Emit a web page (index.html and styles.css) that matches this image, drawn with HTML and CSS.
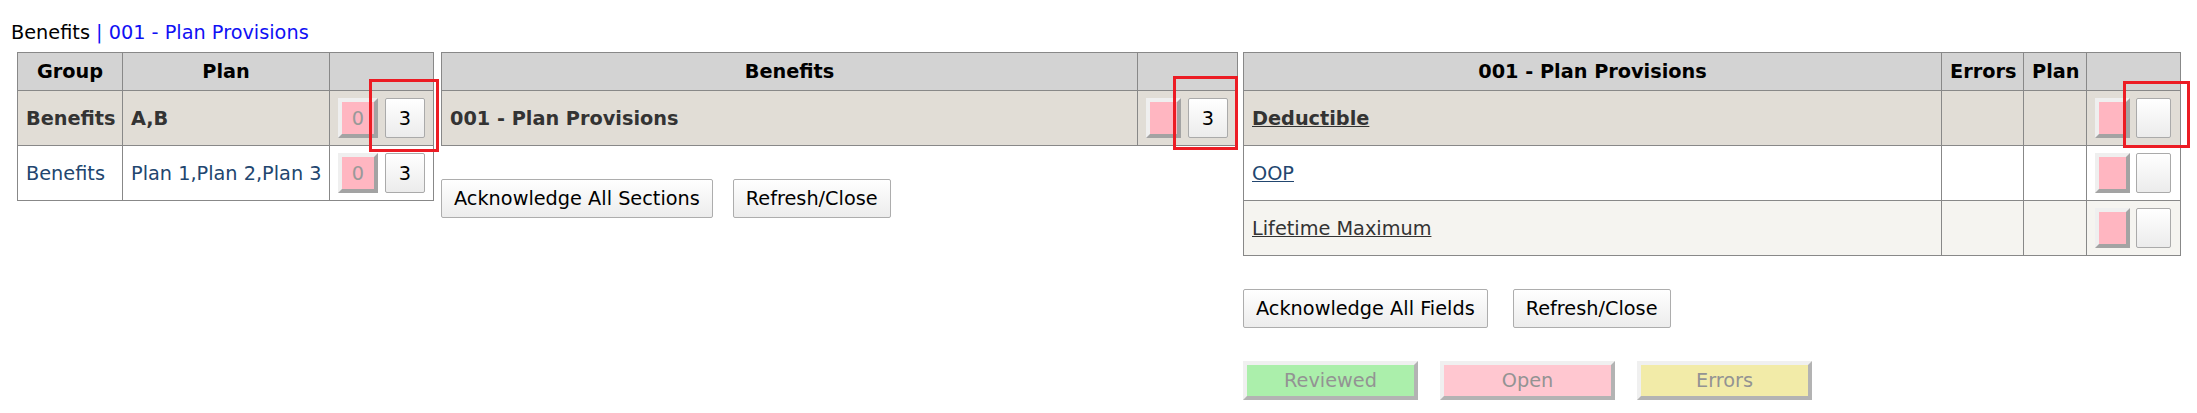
FILE: index.html
```html
<!DOCTYPE html>
<html>
<head>
  <title>Benefits Review</title>
  <link rel="stylesheet" href="styles.css">
</head>
<body>
  <div class="page">
    <div class="crumb">Benefits <a class="crumb-link" href="#">| 001 - Plan Provisions</a></div>

    <div class="panels">
      <div class="panel panel-groups">
        <table class="grid">
          <colgroup>
            <col style="width:105px">
            <col style="width:207px">
            <col style="width:104px">
          </colgroup>
          <thead>
            <tr>
              <th>Group</th>
              <th>Plan</th>
              <th></th>
            </tr>
          </thead>
          <tbody>
            <tr class="row-head">
              <td>Benefits</td>
              <td>A,B</td>
              <td>
                <div class="marks">
                  <button class="flag" disabled>0</button>
                  <span class="pick">
                    <button class="count">3</button>
                    <span class="ring ring-groups"></span>
                  </span>
                </div>
              </td>
            </tr>
            <tr class="row-item">
              <td class="blue">Benefits</td>
              <td class="blue">Plan 1,Plan 2,Plan 3</td>
              <td>
                <div class="marks">
                  <button class="flag" disabled>0</button>
                  <button class="count">3</button>
                </div>
              </td>
            </tr>
          </tbody>
        </table>
      </div>

      <div class="panel panel-sections">
        <table class="grid">
          <colgroup>
            <col style="width:696px">
            <col style="width:100px">
          </colgroup>
          <thead>
            <tr>
              <th>Benefits</th>
              <th></th>
            </tr>
          </thead>
          <tbody>
            <tr class="row-head">
              <td>001 - Plan Provisions</td>
              <td>
                <div class="marks">
                  <button class="flag flag-empty"></button>
                  <span class="pick">
                    <button class="count">3</button>
                    <span class="ring ring-sections"></span>
                  </span>
                </div>
              </td>
            </tr>
          </tbody>
        </table>
        <div class="actions actions-sections">
          <button class="btn">Acknowledge All Sections</button>
          <button class="btn">Refresh/Close</button>
        </div>
      </div>

      <div class="panel panel-fields">
        <table class="grid">
          <colgroup>
            <col style="width:698px">
            <col style="width:82px">
            <col style="width:63px">
            <col style="width:94px">
          </colgroup>
          <thead>
            <tr>
              <th>001 - Plan Provisions</th>
              <th>Errors</th>
              <th>Plan</th>
              <th></th>
            </tr>
          </thead>
          <tbody>
            <tr class="row-head">
              <td><a class="field field-dark" href="#">Deductible</a></td>
              <td></td>
              <td></td>
              <td>
                <div class="marks marks-tight">
                  <button class="flag flag-empty"></button>
                  <span class="pick">
                    <button class="count count-empty"></button>
                    <span class="ring ring-fields"></span>
                  </span>
                </div>
              </td>
            </tr>
            <tr class="row-item">
              <td><a class="field" href="#">OOP</a></td>
              <td></td>
              <td></td>
              <td>
                <div class="marks marks-tight">
                  <button class="flag flag-empty"></button>
                  <button class="count count-empty"></button>
                </div>
              </td>
            </tr>
            <tr class="row-alt">
              <td><a class="field field-dark" href="#">Lifetime Maximum</a></td>
              <td></td>
              <td></td>
              <td>
                <div class="marks marks-tight">
                  <button class="flag flag-empty"></button>
                  <button class="count count-empty"></button>
                </div>
              </td>
            </tr>
          </tbody>
        </table>
        <div class="actions actions-fields">
          <button class="btn">Acknowledge All Fields</button>
          <button class="btn">Refresh/Close</button>
        </div>
        <div class="legend">
          <button class="key key-reviewed" disabled>Reviewed</button>
          <button class="key key-open" disabled>Open</button>
          <button class="key key-errors" disabled>Errors</button>
        </div>
      </div>
    </div>
  </div>
</body>
</html>
```

FILE: styles.css
```css
body {
  margin: 0;
  font-family: "DejaVu Sans", Verdana, sans-serif;
  font-size: 19.3px;
  color: #000;
  background-color: #ffffff;
}
.page {
  padding: 21px 11px 0;
}
.crumb {
  height: 24px;
  line-height: 24px;
  margin-bottom: 7px;
}
.crumb-link {
  color: #1010f4;
  text-decoration: none;
}
.panels {
  display: flex;
  align-items: flex-start;
  margin-left: 6px;
}
.panel-groups {
  width: 416px;
  margin-right: 8px;
}
.panel-sections {
  width: 796px;
  margin-right: 6px;
}
.panel-fields {
  width: 937px;
}
.grid {
  width: 100%;
  table-layout: fixed;
  border-collapse: collapse;
}
.grid th, .grid td {
  border: 1px solid #888;
  padding: 0 8px;
  white-space: nowrap;
}
.grid th {
  height: 37px;
  background-color: #d3d3d3;
  font-weight: bold;
  text-align: center;
}
.grid td {
  height: 54px;
  text-align: left;
  color: #333;
}
.row-head td {
  background-color: #e1ddd6;
  font-weight: bold;
}
.row-item td {
  background-color: #ffffff;
}
.row-alt td {
  background-color: #f5f4f0;
}
.blue {
  color: #22466f !important;
}
.field {
  color: #22466f;
}
.field-dark {
  color: #333;
}
.marks {
  display: flex;
  gap: 7px;
  align-items: center;
}
.marks-tight {
  gap: 6px;
}
.flag {
  width: 40px;
  height: 40px;
  padding: 0;
  border-style: solid;
  border-width: 4px;
  border-color: #efefef #a3a3a3 #a3a3a3 #efefef;
  background-color: #ffb6c1;
  color: #999;
  font-family: inherit;
  font-size: 19.3px;
}
.flag-empty {
  width: 35px;
}
.count {
  width: 40px;
  height: 40px;
  padding: 0;
  border: 1px solid #aaa;
  border-radius: 2px;
  background: linear-gradient(#ffffff, #ececec);
  color: #000;
  font-family: inherit;
  font-size: 19.3px;
}
.count-empty {
  width: 35px;
}
.pick {
  position: relative;
  display: inline-flex;
}
.ring {
  position: absolute;
  border: 3px solid #ec1c24;
  box-sizing: border-box;
}
.ring-groups {
  left: -16px;
  top: -19px;
  width: 70px;
  height: 73px;
}
.ring-sections {
  left: -15px;
  top: -22px;
  width: 65px;
  height: 74px;
}
.ring-fields {
  left: -13px;
  top: -17px;
  width: 67px;
  height: 67px;
}
.actions {
  display: flex;
  margin-top: 33px;
}
.actions-sections {
  gap: 20px;
}
.actions-fields {
  gap: 25px;
}
.btn {
  height: 39px;
  padding: 0 12px;
  border: 1px solid #adadad;
  border-radius: 2px;
  background: linear-gradient(#ffffff, #ececec);
  color: #000;
  font-family: inherit;
  font-size: 19.3px;
}
.legend {
  display: flex;
  gap: 22px;
  margin-top: 33px;
}
.key {
  width: 175px;
  height: 39px;
  padding: 0;
  border-style: solid;
  border-width: 4px;
  border-color: #f0f0f0 #b3b3b3 #b3b3b3 #f0f0f0;
  color: #939393;
  font-family: inherit;
  font-size: 19.3px;
}
.key-reviewed {
  background-color: #abefab;
}
.key-open {
  background-color: #ffc7d0;
}
.key-errors {
  background-color: #f2eba8;
}
```
